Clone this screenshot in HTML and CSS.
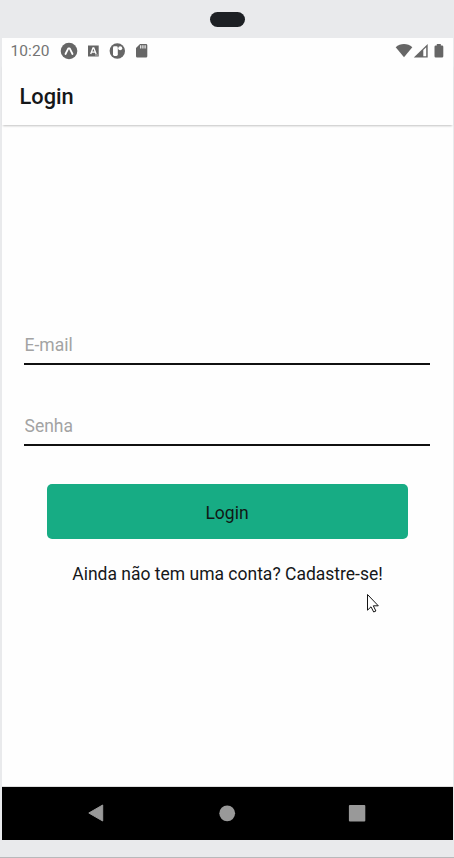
FILE: index.html
```html
<!DOCTYPE html>
<html lang="pt-BR">
<head>
<meta charset="utf-8">
<title>Login</title>
<link rel="stylesheet" href="styles.css">
</head>
<body>
<div class="device">
  <div class="bezel"><div class="camera"></div></div>
  <div class="screen">
    <div class="status">
      <span class="clock">10:20</span>
      <svg class="notices" width="90" height="18" viewBox="0 0 90 18">
        <circle cx="9" cy="9" r="8.3" fill="#666"/>
        <path d="M5.5 12 8.3 6.3h1.4L12.5 12" fill="none" stroke="#fff" stroke-width="1.8" stroke-linecap="round" stroke-linejoin="round"/>
        <path d="M28 3.5h10.7v11H28z" fill="#666"/>
        <path d="M30.7 12 33 6h.8l2.3 6M31.6 10.1h3.5" fill="none" stroke="#fff" stroke-width="1.3"/>
        <path d="M35 13h3" stroke="#bbb" stroke-width="1"/>
        <circle cx="57.3" cy="9" r="7.7" fill="#666"/>
        <rect x="53" y="4.3" width="4.8" height="9.7" rx="1.4" fill="#fff"/>
        <circle cx="60.2" cy="6.2" r="2" fill="#fff"/>
        <path d="M80 2h6a1.3 1.3 0 0 1 1.3 1.3v11a1.3 1.3 0 0 1-1.3 1.3h-8.7a1.3 1.3 0 0 1-1.3-1.3V6z" fill="#666"/>
        <path d="M80.7 3.3v3.2M82.9 3.3v3.2M85.1 3.3v3.2" stroke="#e8e8e8" stroke-width="1.3"/>
      </svg>
      <svg class="signals" width="50" height="18" viewBox="0 0 50 18">
        <path d="M.7 5.2C5.3.8 12.700.8 17.3 5.200L9 15.300z" fill="#666"/>
        <path d="M18.8 15.5 32.7 2v13.500z" fill="#666"/>
        <path d="M28.3 8.100 31.200 5.300v8.900h-2.900z" fill="#fff"/>
        <path d="M41.800 2h4v1.500h1.200q1.300 0 1.300 1.300v9.400q0 1.300-1.300 1.300h-6.200q-1.300 0-1.300-1.300V4.800q0-1.300 1.300-1.300h1z" fill="#666"/>
      </svg>
    </div>
    <header class="header"><h1>Login</h1></header>
    <main class="form">
      <input class="field" type="text" placeholder="E-mail">
      <input class="field" type="password" placeholder="Senha">
      <button class="submit">Login</button>
      <p class="signup">Ainda não tem uma conta? Cadastre-se!</p>
    </main>
    <nav class="nav">
      <svg width="18" height="20" viewBox="0 0 18 20"><path d="M15.700 2v16L1.800 10z" fill="#999" stroke="#999" stroke-linejoin="round"/></svg>
      <svg width="18" height="20" viewBox="0 0 18 20"><circle cx="9.200" cy="10.300" r="7.900" fill="#999"/></svg>
      <svg width="18" height="20" viewBox="0 0 18 20"><rect x=".9" y="2.100" width="16.400" height="16.300" rx="1" fill="#999"/></svg>
    </nav>
  </div>
  <svg class="cursor" width="14" height="21" viewBox="0 0 14 21"><path d="M1.500 1.500v15.700l3.500-3.400 2.700 5.200 2.200-1-2.600-5.200h5z" fill="#fff" stroke="#151515" stroke-width="1"/></svg>
</div>
</body>
</html>
```

FILE: styles.css
```css
* { box-sizing: border-box; }
body {
  margin: 0;
  background: #e9eaec;
  font-family: Roboto, sans-serif;
  color: #151719;
}
.device {
  position: relative;
  height: 858px;
  padding: 0 1px 0 2px;
  border-bottom: 1px solid #b8b9bb;
}
.bezel {
  height: 38px;
  padding-top: 11.500px;
}
.camera {
  width: 35px;
  height: 15px;
  margin-left: 208px;
  border-radius: 8px;
  background: #1d2024;
}
.screen {
  display: flex;
  flex-direction: column;
  height: 802px;
  background: #fefefe;
}
.status {
  display: flex;
  align-items: center;
  height: 26px;
  padding: 0 8px 0 8.500px;
}
.clock {
  width: 49.500px;
  font-size: 15.500px;
  letter-spacing: .1px;
  color: #747474;
}
.signals { margin-left: auto; }
.header {
  display: flex;
  align-items: center;
  height: 61px;
  padding: 3px 17px 0 17.500px;
  box-shadow: 0 2px 2px -1px rgba(0, 0, 0, .24);
}
.header h1 {
  margin: 0;
  font-size: 21.800px;
  font-weight: 500;
}
.form {
  display: flex;
  flex: 1;
  flex-direction: column;
  padding: 199px 23px 0 22px;
  border-bottom: 1px solid #dedede;
}
.field {
  height: 41px;
  margin: 0 0 40px;
  padding: 2px 0 0 .5px;
  border: 0;
  border-bottom: 2px solid #101010;
  background: none;
  font: 17.500px Roboto, sans-serif;
}
.field::placeholder { color: #a3a3a3; }
.submit {
  height: 55px;
  margin: -2px 22.500px 0;
  padding: 2px 0 0;
  border: 0;
  border-radius: 5px;
  background: #17ac84;
  color: #101816;
  font: 17.500px Roboto, sans-serif;
}
.signup {
  margin: 24px 0 0;
  padding-left: 1px;
  font-size: 17.500px;
  line-height: 22px;
  text-align: center;
  white-space: nowrap;
}
.nav {
  display: flex;
  justify-content: space-between;
  align-items: center;
  height: 53px;
  padding: 0 87px 1px 85px;
  background: #000;
}
.cursor {
  position: absolute;
  left: 366px;
  top: 593px;
}
```
